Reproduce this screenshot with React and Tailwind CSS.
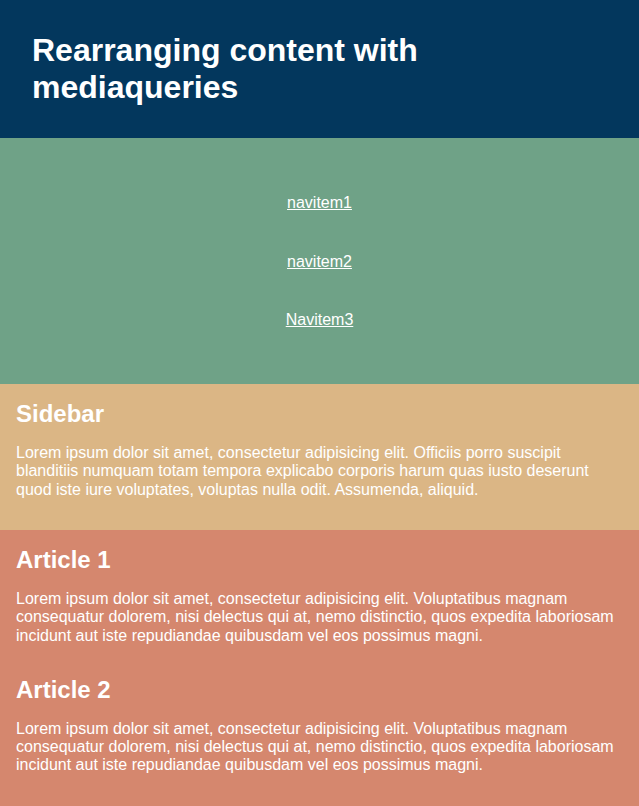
export default function App() {
  const lorem =
    "Lorem ipsum dolor sit amet, consectetur adipisicing elit. Voluptatibus magnam consequatur dolorem, nisi delectus qui at, nemo distinctio, quos expedita laboriosam incidunt aut iste repudiandae quibusdam vel eos possimus magni.";

  return (
    <div className="flex flex-col text-white font-['Liberation_Sans',Arial,sans-serif]">
      <header className="bg-[#03375d] px-8 pt-8 pb-[32.4px]">
        <h1 className="text-[32px] leading-[36.8px] font-bold">
          Rearranging content with mediaqueries
        </h1>
      </header>

      <nav className="bg-[#6fa287] pt-[36.5px] pb-[34.5px]">
        <ul className="flex flex-col items-center">
          {["navitem1", "navitem2", "Navitem3"].map((item) => (
            <li key={item} className="py-5 text-base leading-[18.4px]">
              <a href="#" className="underline text-white">
                {item}
              </a>
            </li>
          ))}
        </ul>
      </nav>

      <aside className="bg-[#dbb685] px-4 pt-4 pb-[31.2px]">
        <h2 className="text-2xl leading-[27.6px] font-bold">Sidebar</h2>
        <p className="mt-4 text-base leading-[18.4px]">
          Lorem ipsum dolor sit amet, consectetur adipisicing elit. Officiis porro suscipit blanditiis numquam totam tempora explicabo corporis harum quas iusto deserunt quod iste iure voluptates, voluptas nulla odit. Assumenda, aliquid.
        </p>
      </aside>

      <main className="bg-[#d5876e] px-4 pt-4 pb-[33px] flex flex-col gap-[31px]">
        {["Article 1", "Article 2"].map((title) => (
          <article key={title}>
            <h2 className="text-2xl leading-[27.6px] font-bold">{title}</h2>
            <p className="mt-4 text-base leading-[18.4px]">{lorem}</p>
          </article>
        ))}
      </main>
    </div>
  );
}
